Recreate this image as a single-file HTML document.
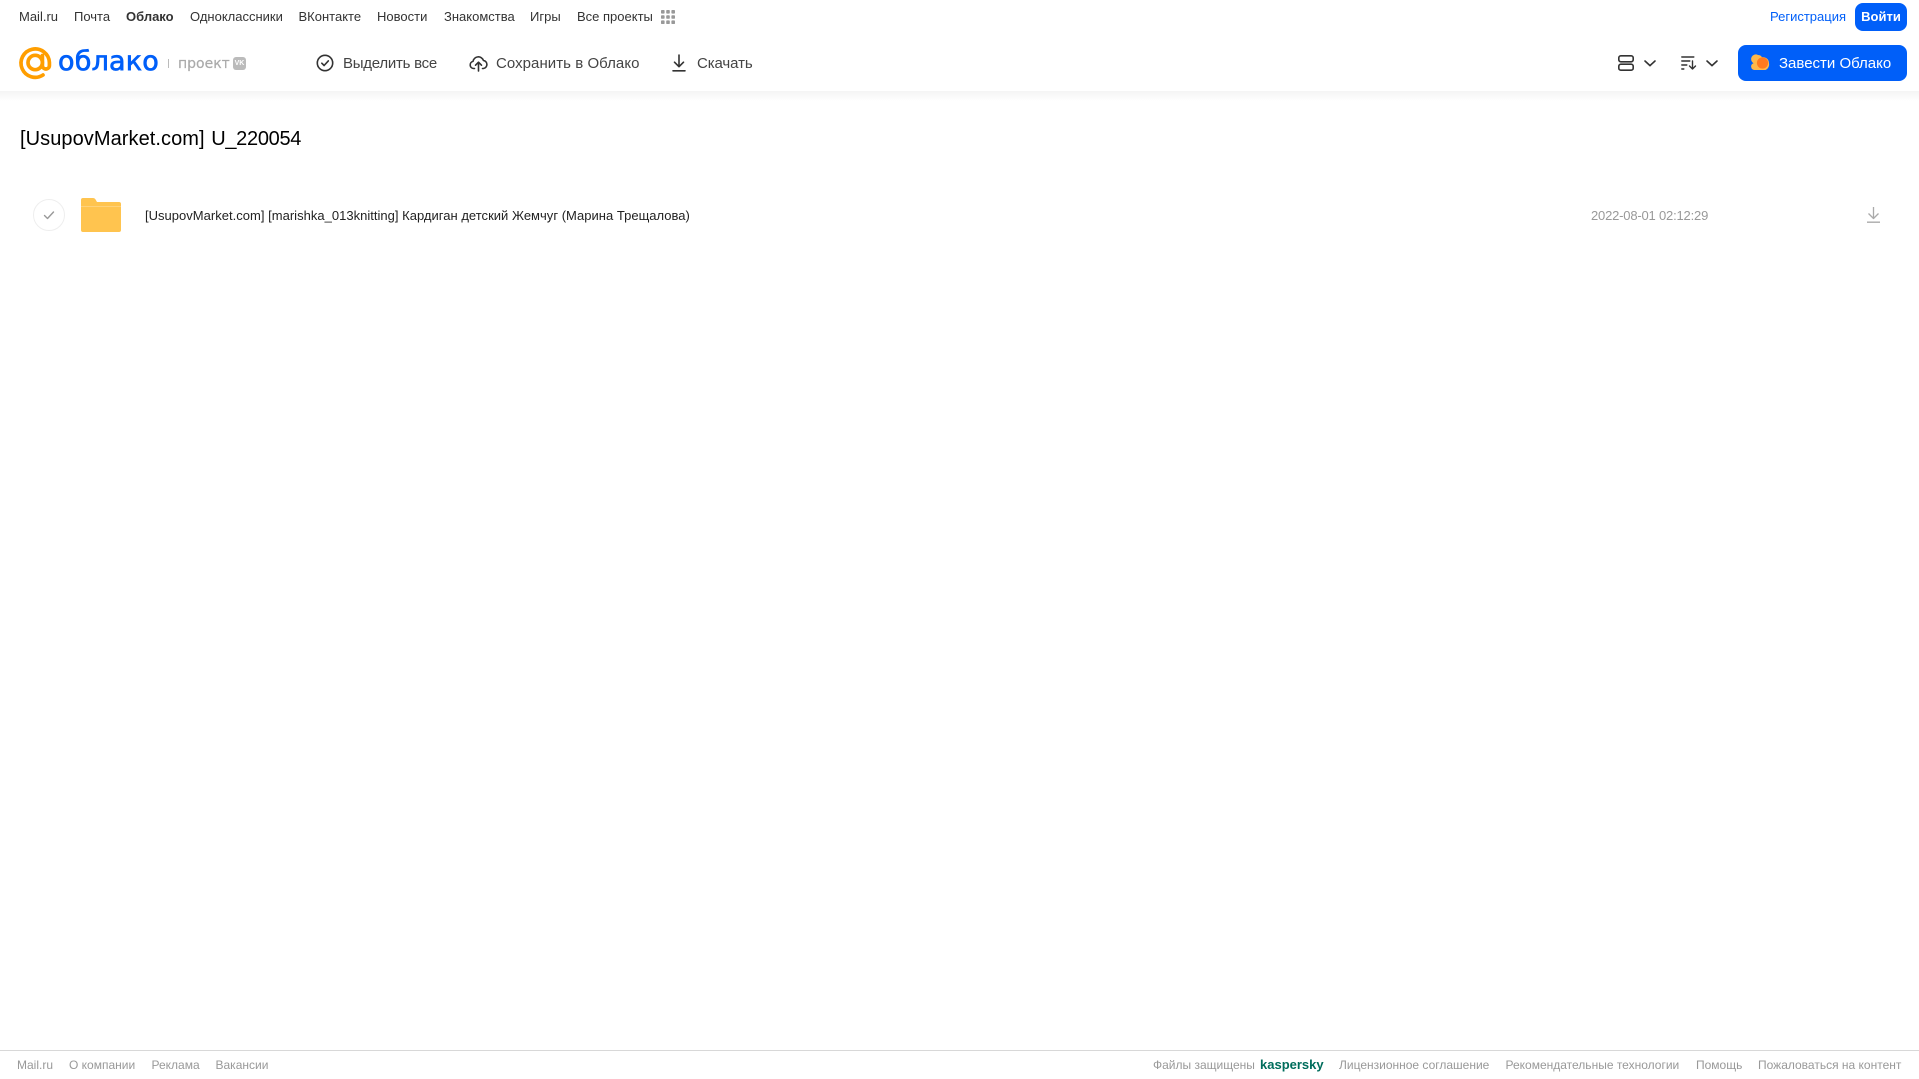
<!DOCTYPE html>
<html lang="ru">
<head>
<meta charset="utf-8">
<title>[UsupovMarket.com] U_220054</title>
<style>
html,body{margin:0;padding:0;background:#fff}
body{position:relative;width:1919px;height:1079px;overflow:hidden;font-family:"Liberation Sans",Arial,sans-serif;color:#333}
a{color:inherit;text-decoration:none}
.t{position:absolute;white-space:nowrap;line-height:20px;height:20px}
.nav{font-size:13px;color:#333;top:7px}
.tool{font-size:15px;color:#444;top:54px}
.foot{font-size:12px;color:#999;top:1055px}
.shadow{position:absolute;left:0;top:91px;width:1919px;height:10px;background:linear-gradient(#f4f4f4,#fff)}
svg{position:absolute;overflow:visible}
.btn{position:absolute;background:#005ff9;color:#fff;border-radius:8px}
</style>
</head>
<body>
<header>
<nav>
<a class="t nav" style="left:19px">Mail.ru</a>
<a class="t nav" style="left:74px">Почта</a>
<a class="t nav" style="left:126px;font-weight:bold">Облако</a>
<a class="t nav" style="left:190px">Одноклассники</a>
<a class="t nav" style="left:298.5px">ВКонтакте</a>
<a class="t nav" style="left:377px">Новости</a>
<a class="t nav" style="left:444px">Знакомства</a>
<a class="t nav" style="left:530px">Игры</a>
<a class="t nav" style="left:577px">Все проекты</a>
</nav>
<svg style="left:661px;top:10px" width="14" height="14" viewBox="0 0 14 14" fill="#999">
<rect x="0" y="0" width="3.6" height="3.6" rx=".8"/><rect x="5.2" y="0" width="3.6" height="3.6" rx=".8"/><rect x="10.4" y="0" width="3.6" height="3.6" rx=".8"/>
<rect x="0" y="5.2" width="3.6" height="3.6" rx=".8"/><rect x="5.2" y="5.2" width="3.6" height="3.6" rx=".8"/><rect x="10.4" y="5.2" width="3.6" height="3.6" rx=".8"/>
<rect x="0" y="10.4" width="3.6" height="3.6" rx=".8"/><rect x="5.2" y="10.4" width="3.6" height="3.6" rx=".8"/><rect x="10.4" y="10.4" width="3.6" height="3.6" rx=".8"/>
</svg>
<a class="t" style="left:1770px;top:7px;font-size:13px;color:#005ff9">Регистрация</a>
<a class="btn" style="left:1855px;top:3px;width:52px;height:28px;line-height:28px;text-align:center;font-size:13px;font-weight:bold">Войти</a>

<svg style="left:0;top:0" width="60" height="90" viewBox="0 0 60 90" fill="none" stroke="#ff9e00" stroke-width="3.7" stroke-linecap="round">
<circle cx="35.2" cy="62.5" r="7.2"/>
<path d="M42.4 55.5V65.5a3.5 3.5 0 0 0 7 0V62.5A14.2 14.2 0 1 0 43 75"/>
</svg>
<div class="t" style="left:58px;top:46px;height:32px;line-height:32px;font-family:'DejaVu Sans',sans-serif;font-size:27px;letter-spacing:.2px;color:#005ff9;-webkit-text-stroke:.7px #005ff9">облако</div>
<div style="position:absolute;left:168px;top:59px;width:1px;height:9px;background:#bbb"></div>
<div class="t" style="left:178px;top:54px;font-family:'DejaVu Sans',sans-serif;font-size:14px;color:#aaa;-webkit-text-stroke:.2px #aaa">проект</div>
<div style="position:absolute;left:233px;top:57px;width:13px;height:13px;border-radius:3px;background:#bbb;color:#fff;font-size:7px;font-weight:bold;line-height:13px;text-align:center">VK</div>

<svg style="left:316px;top:54px" width="18" height="18" viewBox="0 0 18 18" fill="none" stroke="#333" stroke-width="1.6" stroke-linecap="round" stroke-linejoin="round">
<circle cx="9" cy="9" r="7.7"/><path d="M5.8 9.2l2.3 2.3 4.2-4.6"/>
</svg>
<a class="t tool" style="left:343px;letter-spacing:-.25px">Выделить все</a>
<svg style="left:469px;top:54px" width="19" height="18" viewBox="0 0 19 18" fill="none" stroke="#333" stroke-width="1.6" stroke-linecap="round" stroke-linejoin="round">
<path d="M5.5 14.5H4.5A3.6 3.6 0 0 1 4 7.4 5.4 5.4 0 0 1 14.4 6.4 4.1 4.1 0 0 1 14.5 14.5H13.5"/><path d="M9.5 17V8.5M6.5 11.2l3-3 3 3"/>
</svg>
<a class="t tool" style="left:496px;letter-spacing:.05px">Сохранить в Облако</a>
<svg style="left:672px;top:54px" width="14" height="18" viewBox="0 0 14 18" fill="none" stroke="#333" stroke-width="1.6" stroke-linecap="round" stroke-linejoin="round">
<path d="M7 1v11.5M2.5 8.2L7 12.7l4.5-4.5M1 16.8h12"/>
</svg>
<a class="t tool" style="left:697px;letter-spacing:-.1px">Скачать</a>

<svg style="left:1618px;top:55px" width="16" height="16" viewBox="0 0 16 16" fill="none" stroke="#333" stroke-width="1.6">
<rect x=".8" y=".8" width="14.4" height="6" rx="2"/><rect x=".8" y="9.2" width="14.4" height="6" rx="2"/>
</svg>
<svg style="left:1644px;top:60px" width="12" height="7" viewBox="0 0 12 7" fill="none" stroke="#333" stroke-width="1.6" stroke-linecap="round" stroke-linejoin="round"><path d="M1 1l5 4.6L11 1"/></svg>
<svg style="left:1681px;top:56px" width="16" height="14" viewBox="0 0 16 14" fill="none" stroke="#333" stroke-width="1.4" stroke-linecap="round" stroke-linejoin="round">
<path d="M.8 1h12M.8 5h8M.8 9h5M.8 13h2"/><path d="M11.5 5v8M8.5 10l3 3 3-3"/>
</svg>
<svg style="left:1706px;top:60px" width="12" height="7" viewBox="0 0 12 7" fill="none" stroke="#333" stroke-width="1.6" stroke-linecap="round" stroke-linejoin="round"><path d="M1 1l5 4.6L11 1"/></svg>

<a class="btn" style="left:1738px;top:45px;width:169px;height:36px"></a>
<svg style="left:1751px;top:55px" width="18" height="15" viewBox="0 0 18 15">
<path d="M3.5 15A3.5 3.5 0 0 1 2.5 8.2 4.6 4.6 0 0 1 7 0a4.8 4.8 0 0 1 4 2.2A6 6 0 0 1 18 8a6 6 0 0 1-3.5 7z" fill="#ffb84a"/>
<circle cx="11.5" cy="8" r="5.6" fill="#ff7a1f"/>
</svg>
<a class="t" style="left:1779px;top:54px;font-size:15px;color:#fff">Завести Облако</a>
<div class="shadow"></div>
</header>

<main>
<h1 class="t" style="left:20px;top:126px;height:26px;line-height:26px;margin:0;font-size:20px;font-weight:normal;color:#000"><span style="letter-spacing:.07px">[UsupovMarket.com]</span> <span style="margin-left:1px;letter-spacing:-.3px">U_220054</span></h1>
<svg style="left:33px;top:199px" width="32" height="32" viewBox="0 0 32 32" fill="none">
<circle cx="16" cy="16" r="15.5" stroke="#eeeeee"/>
<path d="M11.5 16.5l3 3 6-6.5" stroke="#999" stroke-width="1.4" stroke-linecap="round" stroke-linejoin="round"/>
</svg>
<svg style="left:81px;top:198px" width="40" height="34" viewBox="0 0 40 34">
<path d="M2 0H12a3 3 0 0 1 2.4 1.2L16 4H38a2 2 0 0 1 2 2V32a2 2 0 0 1-2 2H2a2 2 0 0 1-2-2V2A2 2 0 0 1 2 0z" fill="#ffc44f"/>
<path d="M0 8.5H40" stroke="#ffd27a" stroke-width="1"/>
</svg>
<a class="t" style="left:145px;top:206px;font-size:13px;letter-spacing:.015px;color:#222">[UsupovMarket.com] [marishka_013knitting] Кардиган детский Жемчуг (Марина Трещалова)</a>
<div class="t" style="left:1591px;top:206px;font-size:13px;letter-spacing:-.19px;color:#999">2022-08-01 02:12:29</div>
<svg style="left:1867px;top:207px" width="13" height="16" viewBox="0 0 13 16" fill="none" stroke="#aaa" stroke-width="1.3" stroke-linejoin="round">
<path d="M6.5 0v11M1.5 6.5l5 5 5-5M0 15.2h13"/>
</svg>
</main>

<footer>
<div style="position:absolute;left:0;top:1050px;width:1919px;height:1px;background:#d8d8d8"></div>
<a class="t foot" style="left:17px">Mail.ru</a>
<a class="t foot" style="left:69px">О компании</a>
<a class="t foot" style="left:151.5px">Реклама</a>
<a class="t foot" style="left:215.5px">Вакансии</a>
<span class="t foot" style="left:1153px">Файлы защищены</span>
<span class="t foot" style="left:1260px;font-size:13px;font-weight:bold;color:#006d5c">kaspersky</span>
<a class="t foot" style="left:1339px">Лицензионное соглашение</a>
<a class="t foot" style="left:1505.5px">Рекомендательные технологии</a>
<a class="t foot" style="left:1696px">Помощь</a>
<a class="t foot" style="left:1758px">Пожаловаться на контент</a>
</footer>
</body>
</html>
